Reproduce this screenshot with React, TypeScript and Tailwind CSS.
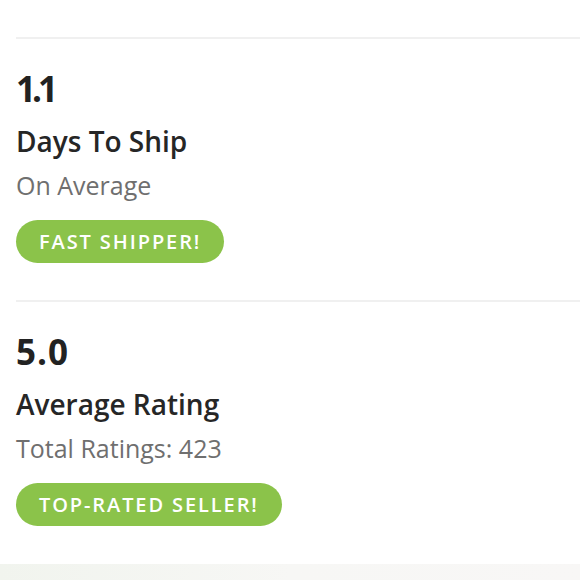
import React from "react";

function Stat({ value, valueClass, title, sub, badge }: { value: string; valueClass: string; title: string; sub: string; badge: string }) {
  return (
    <div className="flex flex-col items-start">
      <div className={valueClass}>{value}</div>
      <div className="mt-[21px] text-[28px] font-semibold leading-[28px] text-[#262626]">{title}</div>
      <div className="mt-[18px] text-[25px] leading-[25px] text-[#6f6f6f]">{sub}</div>
      <div className="mt-[22px] h-[43px] rounded-full bg-[#8bc34a] px-[23px] flex items-center text-[20px] font-semibold tracking-[1.9px] text-white">
        {badge}
      </div>
    </div>
  );
}

export default function App() {
  return (
    <div className="w-[580px] h-[580px] bg-white overflow-hidden flex flex-col" style={{ fontFamily: "'Open Sans', sans-serif" }}>
      <div className="ml-4 mt-[37px] h-[2px] bg-[#f0f0f0]" />
      <div className="pl-4 pt-[32px]">
        <Stat
          value="1.1"
          valueClass="text-[35px] font-bold leading-[35px] text-[#222] tracking-[-4px]"
          title="Days To Ship"
          sub="On Average"
          badge="FAST SHIPPER!"
        />
      </div>
      <div className="ml-4 mt-[37px] h-[2px] bg-[#f0f0f0]" />
      <div className="pl-4 pt-[32px]">
        <Stat
          value="5.0"
          valueClass="text-[35px] font-bold leading-[35px] text-[#222] tracking-[1px]"
          title="Average Rating"
          sub="Total Ratings: 423"
          badge="TOP-RATED SELLER!"
        />
      </div>
      <div className="mt-auto h-[16px] bg-gradient-to-r from-[#f1f4ee] via-[#f7f7f5] to-[#f8f7f6]" />
    </div>
  );
}
